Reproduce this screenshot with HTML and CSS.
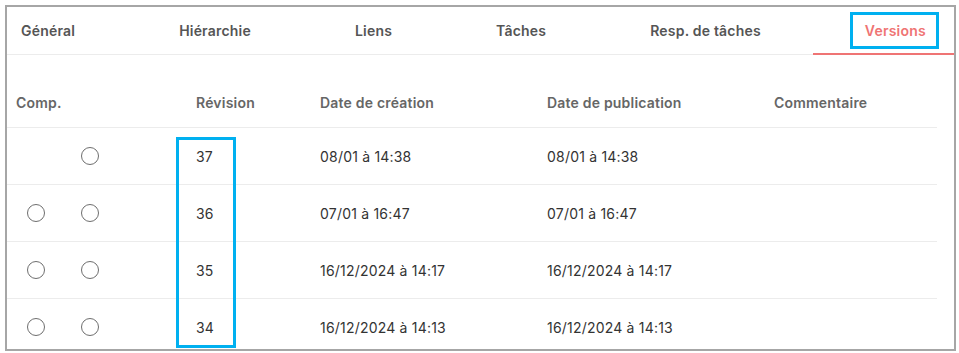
FILE: index.html
```html
<!DOCTYPE html>
<html lang="fr">
<head>
    <meta charset="UTF-8">
    <meta name="viewport" content="width=device-width, initial-scale=1.0">
    <title>Versions</title>
    <link rel="stylesheet" href="styles.css">
</head>
<body>
    <div class="frame">
        <div class="tabs">
            <div class="tab tab-first">Général</div>
            <div class="tab">Hiérarchie</div>
            <div class="tab">Liens</div>
            <div class="tab">Tâches</div>
            <div class="tab">Resp. de tâches</div>
            <div class="tab active"><span class="mark">Versions</span></div>
        </div>
        <div class="table">
            <div class="row head">
                <div class="cell">Comp.</div>
                <div class="cell">Révision</div>
                <div class="cell">Date de création</div>
                <div class="cell">Date de publication</div>
                <div class="cell">Commentaire</div>
            </div>
            <div class="row">
                <div class="cell radios"><span class="radio hidden"></span><span class="radio"></span></div>
                <div class="cell">37</div>
                <div class="cell">08/01 à 14:38</div>
                <div class="cell">08/01 à 14:38</div>
                <div class="cell"></div>
            </div>
            <div class="row">
                <div class="cell radios"><span class="radio"></span><span class="radio"></span></div>
                <div class="cell">36</div>
                <div class="cell">07/01 à 16:47</div>
                <div class="cell">07/01 à 16:47</div>
                <div class="cell"></div>
            </div>
            <div class="row">
                <div class="cell radios"><span class="radio"></span><span class="radio"></span></div>
                <div class="cell">35</div>
                <div class="cell">16/12/2024 à 14:17</div>
                <div class="cell">16/12/2024 à 14:17</div>
                <div class="cell"></div>
            </div>
            <div class="row">
                <div class="cell radios"><span class="radio"></span><span class="radio"></span></div>
                <div class="cell">34</div>
                <div class="cell">16/12/2024 à 14:13</div>
                <div class="cell">16/12/2024 à 14:13</div>
                <div class="cell"></div>
            </div>
            <div class="col-mark"></div>
        </div>
    </div>
</body>
</html>
```

FILE: styles.css
```css
body {
    margin: 0;
    padding: 5px 0 0 5px;
    font-family: Inter, "Noto Sans", sans-serif;
    font-size: 14px;
    letter-spacing: 0.2px;
    color: #333;
    background: #fff;
}
.frame {
    width: 947px;
    height: 342px;
    border: 2px solid #a6a6a6;
    overflow: hidden;
}
.tabs {
    display: flex;
    height: 48px;
    overflow: hidden;
}
.tab {
    flex: none;
    display: flex;
    align-items: center;
    padding: 0 52px;
    height: 48px;
    box-sizing: border-box;
    border-bottom: 1px solid #ececec;
    font-weight: 600;
    color: #555;
    white-space: nowrap;
}
.tab-first {
    padding-left: 14px;
}
.tab.active {
    color: #ef7474;
    border-bottom: 2px solid #ef7474;
}
.mark {
    display: inline-block;
    margin: 0 -13px 0 -15px;
    padding: 8px 10px 8px 12px;
    line-height: 15px;
    border: 3px solid #00b0f0;
}
.table {
    position: relative;
    width: 930px;
}
.row {
    display: grid;
    grid-template-columns: 180px 124px 227px 227px 172px;
    height: 57px;
    box-sizing: border-box;
    border-bottom: 1px solid #ececec;
    align-items: center;
}
.row.head {
    height: 73px;
    align-items: end;
    padding-bottom: 16px;
    font-weight: 600;
    color: #666;
}
.cell {
    padding-left: 9px;
    white-space: nowrap;
}
.radios {
    display: flex;
    gap: 36px;
    padding-left: 20px;
}
.radio {
    width: 16px;
    height: 16px;
    border: 1.5px solid #6e6e6e;
    border-radius: 50%;
}
.radio.hidden {
    visibility: hidden;
}
.col-mark {
    position: absolute;
    left: 169px;
    top: 82px;
    width: 54px;
    height: 205px;
    border: 3px solid #00b0f0;
}
```
